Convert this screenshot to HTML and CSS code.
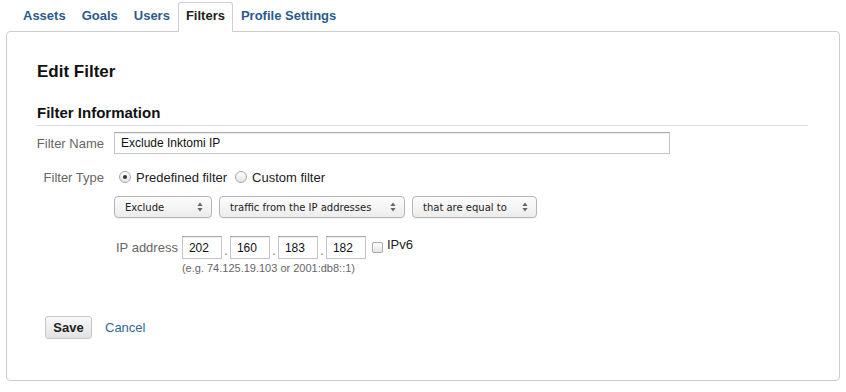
FILE: index.html
```html
<!DOCTYPE html>
<html lang="en">

<head>
    <meta name="viewport" content="width=device-width, initial-scale=1">
    <meta charset="utf-8">
    <link rel="stylesheet" href="styles.css">
</head>

<body>
    <nav class="tabs">
        <a class="tab" href="#">Assets</a>
        <a class="tab" href="#">Goals</a>
        <a class="tab" href="#">Users</a>
        <a class="tab active" href="#">Filters</a>
        <a class="tab" href="#">Profile Settings</a>
    </nav>
    <div class="panel">
        <h1>Edit Filter</h1>
        <h2>Filter Information</h2>

        <div class="row row-name">
            <label class="row-label" for="filterName">Filter Name</label>
            <input class="text-input name-input" id="filterName" type="text" value="Exclude Inktomi IP">
        </div>

        <div class="row row-type">
            <span class="row-label">Filter Type</span>
            <div class="radios">
                <span class="radio checked"></span>
                <span class="radio-text">Predefined filter</span>
                <span class="radio"></span>
                <span class="radio-text">Custom filter</span>
            </div>
        </div>

        <div class="row row-selects">
            <span class="row-label"></span>
            <div class="selects">
                <div class="select sel-action">
                    <span>Exclude</span>
                    <svg width="6" height="10" viewBox="0 0 6 10"><path d="M3 0.5 L5.6 4 H0.4 Z M3 9.5 L0.4 6 H5.6 Z" fill="#666"/></svg>
                </div>
                <div class="select sel-source">
                    <span>traffic from the IP addresses</span>
                    <svg width="6" height="10" viewBox="0 0 6 10"><path d="M3 0.5 L5.6 4 H0.4 Z M3 9.5 L0.4 6 H5.6 Z" fill="#666"/></svg>
                </div>
                <div class="select sel-match">
                    <span>that are equal to</span>
                    <svg width="6" height="10" viewBox="0 0 6 10"><path d="M3 0.5 L5.6 4 H0.4 Z M3 9.5 L0.4 6 H5.6 Z" fill="#666"/></svg>
                </div>
            </div>
        </div>

        <div class="row row-ip">
            <span class="row-label"></span>
            <div class="ip-block">
                <span class="ip-label">IP address</span>
                <div class="ip-fields">
                    <input class="text-input ip-input" type="text" value="202">
                    <span class="dot">.</span>
                    <input class="text-input ip-input" type="text" value="160">
                    <span class="dot">.</span>
                    <input class="text-input ip-input" type="text" value="183">
                    <span class="dot">.</span>
                    <input class="text-input ip-input" type="text" value="182">
                    <span class="checkbox"></span>
                    <span class="ipv6">IPv6</span>
                </div>
                <span class="ip-hint">(e.g. 74.125.19.103 or 2001:db8::1)</span>
            </div>
        </div>

        <div class="actions">
            <button class="save" type="button">Save</button>
            <a class="cancel" href="#">Cancel</a>
        </div>
    </div>
</body>

</html>
```

FILE: styles.css
```css
body {
    margin: 0;
    font-family: "Liberation Sans", Arial, sans-serif;
    color: #222;
    background: #fff;
}

.tabs {
    display: flex;
    padding: 2px 0 0 15px;
    height: 29px;
}

.tab {
    display: block;
    height: 29px;
    line-height: 26px;
    padding: 0 7px;
    border: 1px solid transparent;
    border-bottom: none;
    box-sizing: border-box;
    font-size: 13px;
    font-weight: bold;
    color: #2b5b8c;
    text-decoration: none;
}

.tab.active {
    height: 30px;
    margin-bottom: -1px;
    border-color: #cfcfcf;
    border-radius: 3px 3px 0 0;
    background: #fff;
    color: #222;
    position: relative;
    z-index: 1;
}

.panel {
    margin: 0 6px;
    border: 1px solid #cdcdcd;
    border-radius: 4px;
    padding: 30px 31px 41px 30px;
}

h1 {
    margin: 0;
    font-size: 17px;
    line-height: 20px;
    color: #111;
}

h2 {
    margin: 22px 0 0 0;
    font-size: 15px;
    line-height: 18px;
    padding-bottom: 3px;
    border-bottom: 1px solid #dcdcdc;
    color: #111;
}

.row {
    display: flex;
    align-items: center;
    gap: 10px;
    margin-left: -5px;
}

.row-label {
    width: 72px;
    flex: none;
    text-align: right;
    white-space: nowrap;
    font-size: 13px;
    color: #666;
}

.row-name {
    margin-top: 6px;
}

.text-input {
    box-sizing: border-box;
    height: 22px;
    border: 1px solid #c6c6c6;
    border-top-color: #a9a9a9;
    box-shadow: inset 0 1px 1px rgba(0, 0, 0, .08);
    font-family: "Liberation Sans", Arial, sans-serif;
    font-size: 12px;
    color: #111;
    padding: 0 6px;
    margin: 0;
    outline: none;
}

.name-input {
    width: 556px;
}

.row-type {
    margin-top: 13px;
    height: 20px;
}

.radios {
    display: flex;
    align-items: center;
    padding-left: 5px;
}

.radio {
    box-sizing: border-box;
    width: 12px;
    height: 12px;
    border-radius: 50%;
    border: 1px solid #a8a8a8;
    background: linear-gradient(#fff, #e4e4e4);
    display: flex;
    align-items: center;
    justify-content: center;
}

.radio.checked::after {
    content: "";
    width: 4px;
    height: 4px;
    border-radius: 50%;
    background: #333;
}

.radio-text {
    font-size: 13px;
    margin: 0 8px 0 5px;
    color: #222;
}

.row-selects {
    margin-top: 9px;
}

.selects {
    display: flex;
    gap: 7px;
}

.select {
    box-sizing: border-box;
    height: 22px;
    display: flex;
    align-items: center;
    justify-content: space-between;
    padding: 0 8px 0 10px;
    border: 1px solid #b5b5b5;
    border-radius: 4px;
    background: linear-gradient(#fdfdfd, #ececec);
    box-shadow: 0 1px 1px rgba(0, 0, 0, .06);
    font-family: "DejaVu Sans", Verdana, sans-serif;
    font-size: 10px;
    color: #222;
}

.sel-action {
    width: 98px;
}

.sel-source {
    width: 186px;
}

.sel-match {
    width: 125px;
}

.row-ip {
    margin-top: 18px;
    align-items: flex-start;
}

.ip-block {
    display: grid;
    grid-template-columns: auto auto;
    column-gap: 4px;
    align-items: center;
    padding-left: 2px;
}

.ip-label {
    font-size: 13px;
    color: #666;
}

.ip-fields {
    display: flex;
    align-items: center;
}

.ip-input {
    width: 40px;
    height: 23px;
}

.dot {
    width: 8px;
    text-align: center;
    font-size: 12px;
    color: #666;
    align-self: flex-end;
    line-height: 16px;
}

.checkbox {
    box-sizing: border-box;
    width: 11px;
    height: 11px;
    margin-left: 6px;
    border: 1px solid #aaa;
    border-radius: 2px;
    background: linear-gradient(#fff, #e4e4e4);
}

.ipv6 {
    font-size: 13px;
    margin-left: 4px;
    color: #222;
    align-self: flex-start;
    line-height: 18px;
}

.ip-hint {
    grid-column: 2;
    margin-top: 3px;
    font-size: 11px;
    line-height: 13px;
    color: #666;
}

.actions {
    margin-top: 41px;
    display: flex;
    align-items: center;
    gap: 13px;
    padding-left: 8px;
}

.save {
    box-sizing: border-box;
    width: 47px;
    height: 23px;
    border: 1px solid #c8c8c8;
    border-radius: 3px;
    background: linear-gradient(#f8f8f8, #e2e2e2);
    font-family: "Liberation Sans", Arial, sans-serif;
    font-size: 13px;
    font-weight: bold;
    color: #222;
    padding: 0;
}

.cancel {
    font-size: 13px;
    color: #34679c;
    text-decoration: none;
}
```
